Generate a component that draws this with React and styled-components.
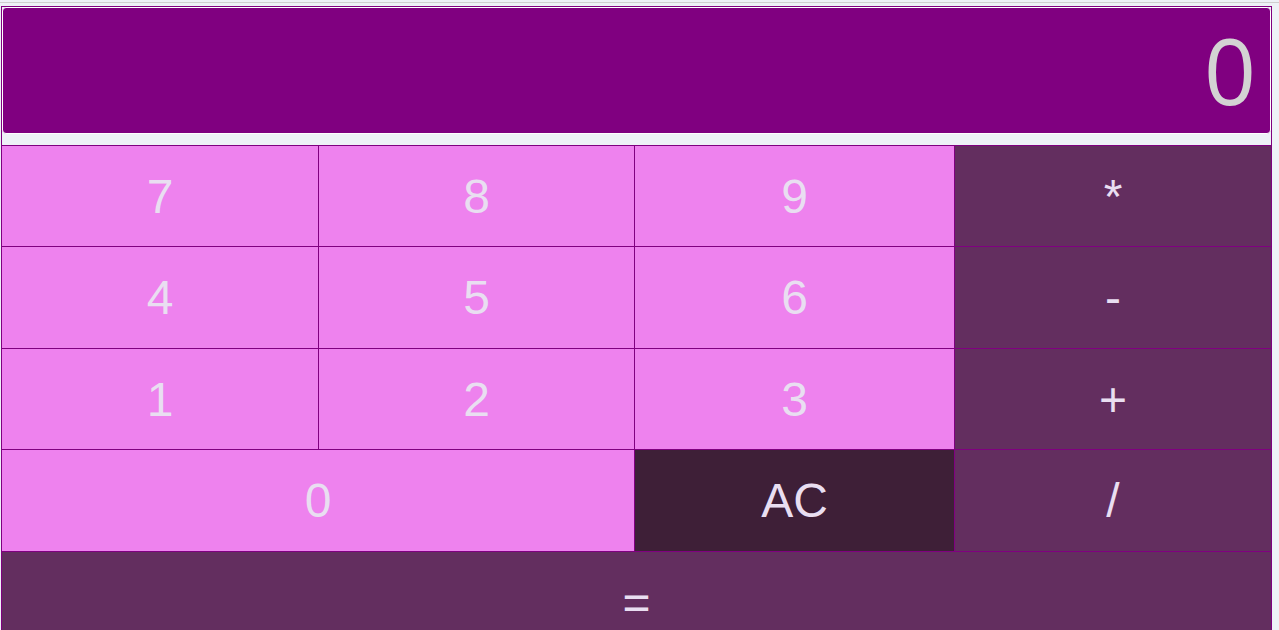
import styled, { createGlobalStyle } from "styled-components";

const GlobalStyle = createGlobalStyle`
  body {
    margin: 0;
    background: #eef2f7;
    font-family: "Liberation Sans", Arial, sans-serif;
  }
`;

const TopRule = styled.div`
  height: 1px;
  margin-top: 2px;
  background: #cfcfcf;
`;

const Calculator = styled.div`
  width: 1269px;
  margin: 3px 0 0 1px;
  border: 1px solid #800080;
  border-bottom: none;
`;

const Display = styled.div`
  height: 125px;
  border: 1px solid #fff;
  border-radius: 4px;
  background: #800080;
  color: #d3d3d3;
  font-family: "Open Sans", "Noto Sans", sans-serif;
  font-size: 91px;
  line-height: 125px;
  text-align: right;
  padding-right: 14px;
  margin-bottom: 11px;
`;

const Keypad = styled.div`
  display: grid;
  grid-template-columns: 316px 315px 319px 316px;
  grid-template-rows: 100px 101px 100px 101px 100px;
  gap: 1px;
  padding-top: 1px;
  background: #800080;
`;

const colors = {
  num: "#ee82ee",
  op: "#632e5f",
  clear: "#3e1f37",
};

const Key = styled.button`
  border: none;
  margin: 0;
  padding: 0;
  background: ${(p) => colors[p.$kind || "num"]};
  color: #e9def1;
  font-family: "Liberation Sans", Arial, sans-serif;
  font-size: 48px;
  grid-column: span ${(p) => p.$span || 1};
  cursor: pointer;
`;

const keys = [
  ["7"], ["8"], ["9"], ["*", "op"],
  ["4"], ["5"], ["6"], ["-", "op"],
  ["1"], ["2"], ["3"], ["+", "op"],
  ["0", "num", 2], ["AC", "clear"], ["/", "op"],
  ["=", "op", 4],
];

export default function App() {
  return (
    <>
      <GlobalStyle />
      <TopRule />
      <Calculator>
        <Display>0</Display>
        <Keypad>
          {keys.map(([label, kind, span]) => (
            <Key key={label} $kind={kind} $span={span}>
              {label}
            </Key>
          ))}
        </Keypad>
      </Calculator>
    </>
  );
}
